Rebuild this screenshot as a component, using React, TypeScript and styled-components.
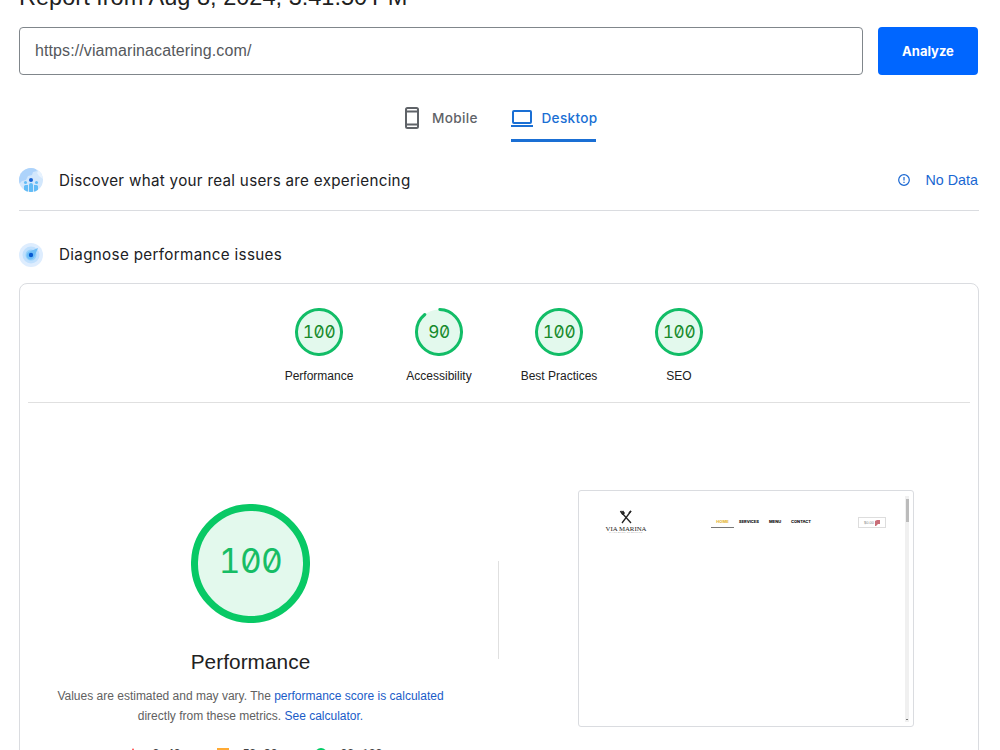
import React from "react";
import styled, { createGlobalStyle } from "styled-components";

const Global = createGlobalStyle`
  * { box-sizing: border-box; }
  body { margin: 0; background: #fff; font-family: "Liberation Sans", Arial, sans-serif; color: #212121; overflow: hidden; }
`;

const Page = styled.main`
  width: 1000px;
  height: 750px;
  padding: 0 21px 0 19px;
  overflow: hidden;
`;

const Title = styled.h1`
  margin: -16px 0 0;
  height: 43px;
  font-size: 23.55px;
  line-height: 27px;
  font-weight: 400;
  white-space: nowrap;
`;

const SearchBar = styled.div`
  display: flex;
  gap: 15px;
  height: 48px;
  margin-right: 1px;
`;

const UrlField = styled.div`
  flex: 1;
  display: flex;
  align-items: center;
  padding: 0 15px 0;
  border: 1px solid #80868b;
  border-radius: 4px;
  font-size: 16px;
  color: #55585c;
`;

const UrlText = styled.span`
  display: inline-block;
  letter-spacing: 0.1px;
`;

const AnalyzeButton = styled.button`
  width: 100px;
  border: 0;
  border-radius: 4px;
  background: #0066ff;
  color: #fff;
  font: 700 13px Inter, sans-serif;
  letter-spacing: 0;
`;

const Tabs = styled.nav`
  display: flex;
  height: 67px;
  padding: 20px 0 0 382px;
`;

const Tab = styled.div<{ $active?: boolean; $gap: number; $width: number }>`
  display: flex;
  align-items: center;
  gap: ${(p) => p.$gap}px;
  width: ${(p) => p.$width}px;
  height: 47px;
  padding-top: 1px;
  color: ${(p) => (p.$active ? "#1a6fd4" : "#5f6368")};
  font: 500 13.6px Inter, sans-serif;
  letter-spacing: ${(p) => (p.$active ? "0.3px" : "0.35px")};
  white-space: nowrap;
  border-bottom: 3px solid transparent;
  border-image: ${(p) => (p.$active ? "linear-gradient(#1a6fd4, #1a6fd4) 1" : "none")};
  svg { flex: none; }
`;

const SectionHeading = styled.header<{ $height: number; $top: number; $line?: boolean }>`
  display: flex;
  align-items: center;
  height: ${(p) => p.$height}px;
  padding-top: ${(p) => p.$top}px;
  border-bottom: ${(p) => (p.$line ? "1px solid #dadce0" : "0")};
`;

const SectionTitle = styled.h2<{ $tracking: number }>`
  flex: 1;
  margin: 0 0 0 16px;
  font: 400 15.2px Inter, sans-serif;
  letter-spacing: ${(p) => p.$tracking}px;
  color: #202124;
`;

const NoData = styled.span`
  display: flex;
  align-items: center;
  gap: 16px;
  margin-right: 1px;
  font-size: 14.3px;
  color: #1967d2;
`;

const Report = styled.section`
  height: 500px;
  padding: 24px 8px 0;
  border: 1px solid #dadce0;
  border-radius: 8px;
`;

const Scores = styled.div`
  display: flex;
  justify-content: center;
  height: 95px;
  border-bottom: 1px solid #e0e0e0;
`;

const Score = styled.div`
  display: flex;
  flex-direction: column;
  align-items: center;
  width: 120px;
  font-size: 12px;
  line-height: 16px;
  gap: 12px;
`;

const Dial = styled.div<{ $size: number; $font: number; $color: string; $lift: number }>`
  display: grid;
  width: ${(p) => p.$size}px;
  height: ${(p) => p.$size}px;
  place-items: center;
  > * { grid-area: 1 / 1; }
  span {
    padding-bottom: ${(p) => p.$lift}px;
    font: 400 ${(p) => p.$font}px/1 Inter, monospace;
    font-feature-settings: "tnum", "zero";
    letter-spacing: -0.02em;
    color: ${(p) => p.$color};
  }
`;

const Detail = styled.div`
  display: flex;
  height: 350px;
`;

const Summary = styled.div`
  width: 470px;
  padding: 101px 25px 0 0;
  display: flex;
  flex-direction: column;
  align-items: center;
`;

const SummaryTitle = styled.h3`
  margin: 25px 0 0;
  font-size: 20.8px;
  line-height: 28px;
  font-weight: 400;
  letter-spacing: 0.05px;
`;

const Note = styled.p`
  margin: 10px 0 0;
  font-size: 12px;
  line-height: 20px;
  text-align: center;
  color: #616161;
  white-space: nowrap;
  a { color: #1a5cc8; }
`;

const Legend = styled.div`
  display: flex;
  align-items: center;
  margin: 19px 0 0 10px;
  height: 18px;
  font: 500 12px/18px Roboto, sans-serif;
  color: #424242;
  white-space: nowrap;
`;

const LegendItem = styled.span<{ $width: number }>`
  display: flex;
  align-items: center;
  gap: 14px;
  width: ${(p) => p.$width}px;
  svg { flex: none; }
`;

const Divider = styled.div`
  width: 1px;
  height: 98px;
  margin-top: 158px;
  background: #e0e0e0;
`;

const Preview = styled.div`
  display: flex;
  width: 336px;
  height: 237px;
  margin: 87px 0 0 79px;
  border: 1px solid #dadce0;
  border-radius: 3px;
`;

const Site = styled.div`
  flex: 1;
  display: flex;
  align-items: flex-start;
  padding: 19px 0 0 25px;
`;

const Brand = styled.div`
  width: 44px;
  display: flex;
  flex-direction: column;
  align-items: center;
  font: 6.8px/7px "Liberation Serif", serif;
  color: #222;
  white-space: nowrap;
  small { font: 2.8px/3px "Liberation Serif", serif; letter-spacing: 0.35px; color: #777; margin-top: -1px; }
`;

const SiteNav = styled.div`
  display: flex;
  margin: 7px 0 0 63px;
  font: 800 4px/10px Inter, sans-serif;
  color: #111;
`;

const SiteLink = styled.span<{ $width: number; $current?: boolean }>`
  width: ${(p) => p.$width}px;
  height: 11px;
  margin-right: ${(p) => (p.$current ? 5 : 0)}px;
  text-align: ${(p) => (p.$current ? "center" : "left")};
  color: ${(p) => (p.$current ? "#e5b740" : "#111")};
  border-bottom: ${(p) => (p.$current ? "1px solid #777" : "0")};
`;

const Cart = styled.div`
  display: flex;
  align-items: center;
  justify-content: center;
  gap: 1px;
  width: 28px;
  height: 11px;
  margin: 7px 0 0 43px;
  border: 1px solid #ddd;
  font: 4px/9px "Liberation Sans", sans-serif;
  color: #888;
`;

const Track = styled.div`
  display: flex;
  flex-direction: column;
  justify-content: space-between;
  align-items: center;
  width: 4px;
  height: 226px;
  margin: 5px 4px 0 0;
  background: #f0f0f0;
`;

const Thumb = styled.div`
  width: 3px;
  height: 23px;
  margin-top: 3px;
  background: #bbb;
`;

const UsersIcon = () => (
  <svg width="24" height="24" viewBox="0 0 24 24">
    <defs><clipPath id="users"><circle cx="12" cy="12" r="12" /></clipPath></defs>
    <g clipPath="url(#users)">
      <path d="M0 0h24v24H0z" fill="#d2e7fc" />
      <path d="M0 0h16l2 3-4 1-1 3-4 1-2 4-4 1-3 3z" fill="#add3fb" />
      <path d="M20 2l4 5v4l-4-3-2-3z" fill="#e7f2fe" />
      <path d="M5 24v-5.5q0-1.5 1.5-1.5H9v7zm5 0v-7q0-2 2-2t2 2v7zm5 0v-7h2.500q1.500 0 1.500 1.500V24z" fill="#62bcf6" />
      <circle cx="6.500" cy="14.500" r="1.500" fill="#62bcf6" /><circle cx="17.500" cy="14.500" r="1.500" fill="#62bcf6" />
      <circle cx="12" cy="12" r="2" fill="#1763d5" />
    </g>
  </svg>
);

const SpeedIcon = () => (
  <svg width="24" height="24" viewBox="0 0 24 24">
    <circle cx="12" cy="12" r="12" fill="#deedfe" /><circle cx="12" cy="12" r="8.500" fill="#c0e0fd" /><circle cx="12" cy="12" r="5.500" fill="#94d0fb" />
    <path d="M19 5 9.500 9a4 4 0 1 0 5.500 5.500z" fill="#6fbff7" /><circle cx="12" cy="12" r="2.200" fill="#075bd1" />
  </svg>
);

const Ring = ({ size, stroke, color, fraction = 1 }: { size: number; stroke: number; color: string; fraction?: number }) => {
  const r = (size - stroke) / 2;
  const length = 2 * Math.PI * r;
  return (
    <svg width={size} height={size}>
      <circle cx={size / 2} cy={size / 2} r={r} fill="#e3f9ed" />
      <circle cx={size / 2} cy={size / 2} r={r} fill="none" stroke={color} strokeWidth={stroke} strokeLinecap="round"
        strokeDasharray={fraction < 1 ? `${length * fraction} ${length}` : undefined}
        transform={`rotate(-88 ${size / 2} ${size / 2})`} />
    </svg>
  );
};

const scores = [
  { label: "Performance", value: 100 },
  { label: "Accessibility", value: 90 },
  { label: "Best Practices", value: 100 },
  { label: "SEO", value: 100 },
];

export default function App() {
  return (
    <>
      <Global />
      <Page>
        <Title>Report from Aug 8, 2024, 3:41:50{"\u202f"}PM</Title>
        <SearchBar>
          <UrlField><UrlText>https://viamarinacatering.com/</UrlText></UrlField>
          <AnalyzeButton>Analyze</AnalyzeButton>
        </SearchBar>
        <Tabs>
          <Tab $gap={9} $width={110}>
            <svg width="22" height="24" viewBox="0 0 22 24" fill="none" stroke="currentColor" strokeWidth="2"><rect x="5" y="2" width="12" height="20" rx="1.500" /><path d="M5 5.500h12M5 18.500h12" /></svg>
            Mobile
          </Tab>
          <Tab $active $gap={8.5} $width={85}>
            <svg width="22" height="24" viewBox="0 0 22 24" fill="none" stroke="currentColor" strokeWidth="2"><rect x="2" y="5" width="18" height="12" rx="1" /><path d="M0 20h22" /></svg>
            Desktop
          </Tab>
        </Tabs>
        <SectionHeading $height={69} $top={8} $line>
          <UsersIcon />
          <SectionTitle $tracking={0.3}>Discover what your real users are experiencing</SectionTitle>
          <NoData>
            <svg width="12" height="12" viewBox="0 0 12 12" fill="none" stroke="currentColor" strokeWidth="1.200"><circle cx="6" cy="6" r="5.300" /><path d="M6 3v3.600M6 7.800v1.200" /></svg>
            No Data
          </NoData>
        </SectionHeading>
        <SectionHeading $height={72} $top={15}>
          <SpeedIcon />
          <SectionTitle $tracking={0.33}>Diagnose performance issues</SectionTitle>
        </SectionHeading>
        <Report>
          <Scores>
            {scores.map((s) => (
              <Score key={s.label}>
                <Dial $size={48} $font={17.2} $color="#168a2b" $lift={0}>
                  <Ring size={48} stroke={3} color="#12bd67" fraction={s.value === 100 ? 1 : 0.88} />
                  <span>{s.value}</span>
                </Dial>
                {s.label}
              </Score>
            ))}
          </Scores>
          <Detail>
            <Summary>
              <Dial $size={119} $font={33.6} $color="#16bd65" $lift={6}>
                <Ring size={119} stroke={7} color="#08c965" />
                <span>100</span>
              </Dial>
              <SummaryTitle>Performance</SummaryTitle>
              <Note>
                Values are estimated and may vary. The <a>performance score is calculated</a><br />
                directly from these metrics. <a>See calculator.</a>
              </Note>
              <Legend>
                <LegendItem $width={90}><svg width="12" height="12"><path d="M6 0l6 12H0z" fill="#f33" /></svg>0–49</LegendItem>
                <LegendItem $width={98}><svg width="12" height="12"><path d="M0 0h12v12H0z" fill="#fa3" /></svg>50–89</LegendItem>
                <LegendItem $width={70}><svg width="12" height="12"><circle cx="6" cy="6" r="6" fill="#0c6" /></svg>90–100</LegendItem>
              </Legend>
            </Summary>
            <Divider />
            <Preview>
              <Site>
                <Brand>
                  <svg width="14" height="15" viewBox="0 0 14 15" fill="none" stroke="#222" strokeWidth="1.300"><path d="M3 3l9 10M12 1 3 13" /><path d="M1.500 1l2 3 1.500-1-1.500-2M12 1l-2 2" strokeWidth="1.600" /></svg>
                  VIA MARINA
                  <small>CATERING SERVICES</small>
                </Brand>
                <SiteNav>
                  <SiteLink $current $width={23}>HOME</SiteLink>
                  <SiteLink $width={30}>SERVICES</SiteLink>
                  <SiteLink $width={22}>MENU</SiteLink>
                  <SiteLink $width={24}>CONTACT</SiteLink>
                </SiteNav>
                <Cart>$0.00 <svg width="5" height="6"><path d="M0 1l2-1h3v4H3L1 6H0z" fill="#c96e78" /></svg></Cart>
              </Site>
              <Track><Thumb /><svg width="2" height="3"><path d="M0 0h2v1H0z" fill="#777" /></svg></Track>
            </Preview>
          </Detail>
        </Report>
      </Page>
    </>
  );
}
